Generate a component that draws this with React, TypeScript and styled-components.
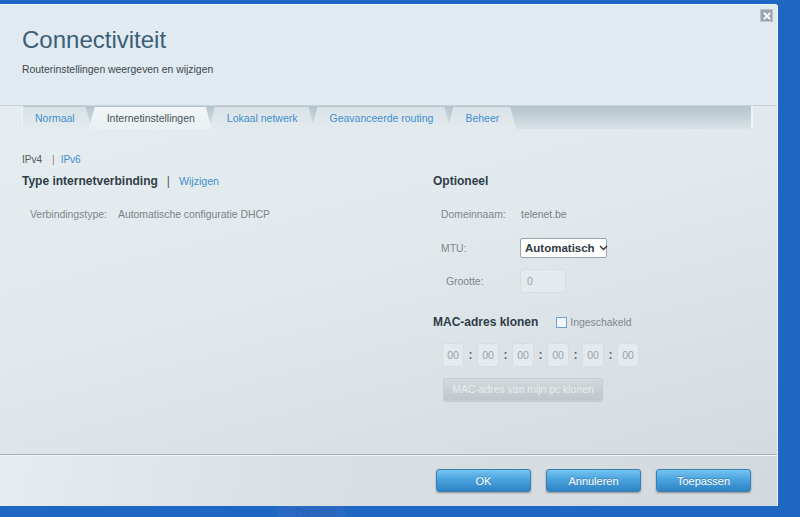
import React, { FC } from 'react'
import styled, { createGlobalStyle } from 'styled-components'

const GlobalStyle = createGlobalStyle`
  html, body {
    margin: 0;
    padding: 0;
    height: 517px;
    overflow: hidden;
    background: #1e67c2;
    font-family: 'Liberation Sans', Arial, sans-serif;
  }
`

const tabs = ['Normaal', 'Internetinstellingen', 'Lokaal netwerk', 'Geavanceerde routing', 'Beheer']
const macParts = ['00', '00', '00', '00', '00', '00']

const App: FC = () => (
  <>
    <GlobalStyle />
    <_Page>
      <_Dialog>
        <_Header>
          <h1>Connectiviteit</h1>
          <p>Routerinstellingen weergeven en wijzigen</p>
          <_Close aria-label="Sluiten">
            <svg width="10" height="10" viewBox="0 0 10 10">
              <path d="M2.5 2.5 L7.5 7.5 M7.5 2.5 L2.5 7.5" stroke="#fff" strokeWidth="1.8" strokeLinecap="square" />
            </svg>
          </_Close>
        </_Header>
        <_Body>
          <_TabBar>
            {tabs.map((t, i) => (
              <_Tab key={t} $active={i === 1} $first={i === 0}>
                {t}
              </_Tab>
            ))}
          </_TabBar>
          <_Columns>
            <_Column>
              <_Versions>
                <span>IPv4</span>
                <_Sep>|</_Sep>
                <_Link>IPv6</_Link>
              </_Versions>
              <_Heading $top={7}>
                Type internetverbinding
                <_HeadSep>|</_HeadSep>
                <_Link>Wijzigen</_Link>
              </_Heading>
              <_Row $top={15}>
                <_Label $width={88}>Verbindingstype:</_Label>
                <_Value>Automatische configuratie DHCP</_Value>
              </_Row>
            </_Column>
            <_Column>
              <_Heading $top={44}>Optioneel</_Heading>
              <_Row $top={15}>
                <_Label $width={80}>Domeinnaam:</_Label>
                <_Value>telenet.be</_Value>
              </_Row>
              <_Row $top={14}>
                <_Label $width={79}>MTU:</_Label>
                <_Select>
                  Automatisch
                  <svg width="9" height="6" viewBox="0 0 9 6">
                    <path d="M1 1 L4.5 4.5 L8 1" fill="none" stroke="#333" strokeWidth="1.4" />
                  </svg>
                </_Select>
              </_Row>
              <_Row $top={11}>
                <_Label $width={74} $indent={5}>Grootte:</_Label>
                <_Field $width={46}>0</_Field>
              </_Row>
              <_MacHead>
                <_Heading $top={0}>MAC-adres klonen</_Heading>
                <_Check>
                  <i />
                  Ingeschakeld
                </_Check>
              </_MacHead>
              <_MacRow>
                {macParts.map((p, i) => (
                  <React.Fragment key={i}>
                    {i > 0 && <_Colon>:</_Colon>}
                    <_Field $width={22} $center>
                      {p}
                    </_Field>
                  </React.Fragment>
                ))}
              </_MacRow>
              <_CloneBtn disabled>MAC-adres van mijn pc klonen</_CloneBtn>
            </_Column>
          </_Columns>
        </_Body>
        <_Footer>
          <_Button>OK</_Button>
          <_Button>Annuleren</_Button>
          <_Button>Toepassen</_Button>
        </_Footer>
      </_Dialog>
      <_Behind>Prioriteit</_Behind>
    </_Page>
  </>
)

export default App

const _Page = styled.div`
  padding-top: 4px;
  height: 513px;
  overflow: hidden;
`

const _Dialog = styled.div`
  position: relative;
  width: 777px;
  height: 501px;
  display: flex;
  flex-direction: column;
  border-top: 1px solid #eef4f8;
  border-right: 1px solid #f2f6f8;
  border-radius: 0 3px 0 0;
  background: #e3eaee;
`

const _Header = styled.header`
  position: relative;
  height: 101px;
  flex-shrink: 0;
  box-sizing: border-box;
  padding: 21px 0 0 22px;
  background: #e0eaf0;
  border-bottom: 1px solid #c9d4da;

  h1 {
    margin: 0;
    font-size: 24px;
    font-weight: normal;
    line-height: 28px;
    color: #3b5f78;
  }

  p {
    margin: 10px 0 0;
    font-size: 10.4px;
    line-height: 12px;
    color: #3d474e;
  }
`

const _Close = styled.div`
  position: absolute;
  top: 4px;
  right: 4px;
  width: 11px;
  height: 11px;
  background: #9aa6ad;
  border: 1px solid #b9c3c8;
  display: flex;
  align-items: center;
  justify-content: center;
`

const _Body = styled.div`
  flex: 1;
  background: linear-gradient(165deg, #e6edf1 0%, #e2e9ed 45%, #d3dbe0 100%);
  border-bottom: 1px solid #a7b1b7;
`

const _TabBar = styled.nav`
  display: flex;
  height: 23px;
  margin: 0 24px 0 22px;
  padding-top: 1px;
  box-sizing: border-box;
  background: linear-gradient(180deg, #b3c4cd 0%, #c9d6dc 60%, #d9e3e8 100%);
  border-right: 2px solid #eef3f5;
  border-left: 1px solid #eef3f5;
`

const _Tab = styled.div<{ $active?: boolean; $first?: boolean }>`
  height: 22px;
  line-height: 22px;
  padding: 0 17px 0 ${(p) => (p.$first ? '12px' : '18px')};
  margin-left: ${(p) => (p.$first ? '0' : '-3px')};
  font-size: 10.5px;
  white-space: nowrap;
  color: ${(p) => (p.$active ? '#4a535a' : '#3e8fd0')};
  background: ${(p) =>
    p.$active
      ? 'linear-gradient(180deg, #f1f5f7 0%, #eaf0f3 100%)'
      : 'linear-gradient(180deg, #d8e2e7 0%, #e4ebee 100%)'};
  clip-path: ${(p) =>
    p.$first
      ? 'polygon(0 0, calc(100% - 6px) 0, 100% 100%, 0 100%)'
      : 'polygon(0 100%, 6px 0, calc(100% - 6px) 0, 100% 100%)'};
  position: relative;
  z-index: ${(p) => (p.$active ? 2 : 1)};
`

const _Columns = styled.div`
  display: grid;
  grid-template-columns: 411px 1fr;
  padding: 0 0 0 22px;
`

const _Column = styled.div`
  display: flex;
  flex-direction: column;
  align-items: flex-start;
`

const _Versions = styled.div`
  margin-top: 25px;
  font-size: 10px;
  line-height: 12px;
  color: #555;
  display: flex;
  align-items: center;
`

const _Sep = styled.span`
  margin: 0 6px 0 10px;
  color: #888;
`

const _Link = styled.span`
  color: #3e8fd0;
`

const _Heading = styled.div<{ $top: number }>`
  margin-top: ${(p) => p.$top}px;
  font-size: 12px;
  line-height: 16px;
  font-weight: bold;
  color: #2f3d48;
  white-space: nowrap;

  ${_Link} {
    font-weight: normal;
    font-size: 10.6px;
  }
`

const _HeadSep = styled.span`
  margin: 0 9px 0 9px;
  font-weight: normal;
  color: #555;
`

const _Row = styled.div<{ $top: number }>`
  display: flex;
  align-items: center;
  margin-top: ${(p) => p.$top}px;
  padding-left: 8px;
  font-size: 10.4px;
  min-height: 20px;
`

const _Label = styled.span<{ $width: number; $indent?: number }>`
  width: ${(p) => p.$width}px;
  padding-left: ${(p) => p.$indent ?? 0}px;
  color: #7f878c;
`

const _Value = styled.span`
  color: #7a8287;
`

const _Select = styled.div`
  display: flex;
  align-items: center;
  gap: 4px;
  width: 87px;
  height: 20px;
  box-sizing: border-box;
  padding: 0 4px;
  background: #fff;
  border: 1px solid #9aa3a8;
  border-radius: 2px;
  font-size: 11.5px;
  font-weight: bold;
  color: #2e3a44;
  white-space: nowrap;

  svg {
    flex-shrink: 0;
  }
`

const _Field = styled.div<{ $width: number; $center?: boolean }>`
  width: ${(p) => p.$width}px;
  height: 24px;
  box-sizing: border-box;
  padding: 0 ${(p) => (p.$center ? 0 : 6)}px;
  display: flex;
  align-items: center;
  justify-content: ${(p) => (p.$center ? 'center' : 'flex-start')};
  background: #e4eaee;
  border: 1px solid #d6dee2;
  border-radius: 3px;
  font-size: 10.5px;
  color: #98a3aa;
`

const _MacHead = styled.div`
  display: flex;
  align-items: center;
  margin-top: 21px;
`

const _Check = styled.label`
  display: flex;
  align-items: center;
  margin-left: 18px;
  font-size: 10.4px;
  color: #7f878c;

  i {
    width: 9px;
    height: 9px;
    margin-right: 3px;
    border: 1px solid #6aa3d4;
    background: #f3f6f8;
  }
`

const _MacRow = styled.div`
  display: flex;
  align-items: center;
  margin-top: 13px;
  padding-left: 9px;
`

const _Colon = styled.span`
  width: 13px;
  text-align: center;
  font-size: 12px;
  font-weight: bold;
  color: #5a6469;
`

const _CloneBtn = styled.button`
  margin: 11px 0 0 10px;
  width: 160px;
  height: 23px;
  padding: 0;
  white-space: nowrap;
  border: 1px solid #c4ccd0;
  border-radius: 3px;
  background: linear-gradient(180deg, #d3d9dd 0%, #bfc7cb 100%);
  font-family: inherit;
  font-size: 10.4px;
  color: #e9edef;
  box-shadow: 0 1px 1px rgba(0, 0, 0, 0.1);
`

const _Footer = styled.footer`
  height: 51px;
  display: flex;
  align-items: flex-start;
  justify-content: flex-end;
  gap: 15px;
  padding: 13px 26px 0 0;
  box-sizing: border-box;
  background: linear-gradient(100deg, #e6ecef 0%, #d9dfe2 40%, #d3d9dc 100%);
  border-top: 1px solid #f0f4f6;
`

const _Button = styled.button`
  width: 95px;
  height: 23px;
  border: 1px solid #3a7fb6;
  border-radius: 3px;
  background: linear-gradient(180deg, #74c4f0 0%, #4aa3de 45%, #2f83c4 100%);
  box-shadow: 0 1px 2px rgba(0, 0, 0, 0.35);
  font-family: inherit;
  font-size: 11px;
  color: #fff;
  text-shadow: 0 -1px 0 rgba(0, 0, 0, 0.25);
`

const _Behind = styled.div`
  width: 68px;
  margin-left: 277px;
  height: 12px;
  background: #2969c4;
  color: #2a5db0;
  font-size: 11px;
  padding-left: 18px;
  box-sizing: border-box;
  line-height: 12px;
`
